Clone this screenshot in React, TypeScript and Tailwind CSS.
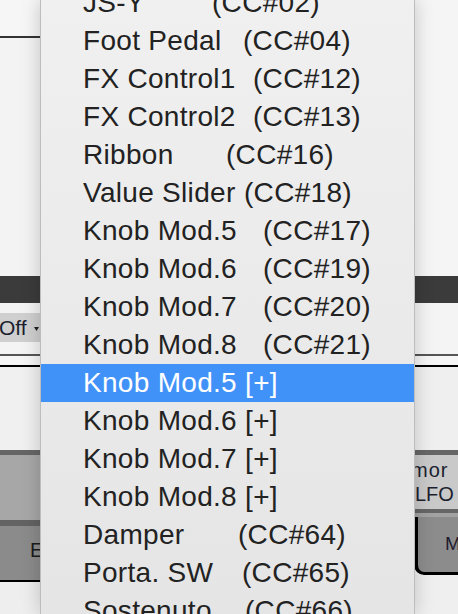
const items = [
  { label: 'JS-Y', cc: '(CC#02)', w: 'w-[129px]' },
  { label: 'Foot Pedal', cc: '(CC#04)', w: 'w-[160px]' },
  { label: 'FX Control1', cc: '(CC#12)', w: 'w-[170px]' },
  { label: 'FX Control2', cc: '(CC#13)', w: 'w-[170px]' },
  { label: 'Ribbon', cc: '(CC#16)', w: 'w-[143px]' },
  { label: 'Value Slider', cc: '(CC#18)', w: 'w-[161px]' },
  { label: 'Knob Mod.5', cc: '(CC#17)', w: 'w-[180px]' },
  { label: 'Knob Mod.6', cc: '(CC#19)', w: 'w-[180px]' },
  { label: 'Knob Mod.7', cc: '(CC#20)', w: 'w-[180px]' },
  { label: 'Knob Mod.8', cc: '(CC#21)', w: 'w-[180px]' },
  { label: 'Knob Mod.5 [+]', active: true },
  { label: 'Knob Mod.6 [+]' },
  { label: 'Knob Mod.7 [+]' },
  { label: 'Knob Mod.8 [+]' },
  { label: 'Damper', cc: '(CC#64)', w: 'w-[155px]' },
  { label: 'Porta. SW', cc: '(CC#65)', w: 'w-[159px]' },
  { label: 'Sostenuto', cc: '(CC#66)', w: 'w-[162px]' },
]

export default function App() {
  return (
    <div className="relative flex h-[614px] w-[458px] overflow-hidden bg-[#f2f2f2] font-['Liberation_Sans',Arial,sans-serif]">
      {/* left strip of the editor behind the menu */}
      <div className="flex w-[40px] shrink-0 flex-col">
        <div className="h-[36px] bg-[#f6f6f6]" />
        <div className="h-[2px] bg-[#333]" />
        <div className="h-[238px] bg-[#f3f3f3]" />
        <div className="h-[27px] bg-[#3b3b3b]" />
        <div className="h-[10px] bg-[#f3f3f3]" />
        <div className="flex h-[29px] items-center bg-[#cfcfcf] text-[21px] text-[#1c1f2e]">
          <span className="ml-[-1px] leading-none">Off</span>
          <svg width="5" height="4" viewBox="0 0 5 4" className="ml-[7px] mt-[2px]">
            <path d="M0 0h5L2.5 4z" fill="#222" />
          </svg>
        </div>
        <div className="h-[12px] bg-[#f4f4f4]" />
        <div className="h-[2px] bg-[#555]" />
        <div className="h-[9px] bg-[#f6f6f6]" />
        <div className="h-[2px] bg-black" />
        <div className="h-[83px] bg-[#f0f0f0]" />
        <div className="h-[5px] bg-[#666]" />
        <div className="h-[65px] bg-[#a7a7a7]" />
        <div className="h-[6px] bg-[#636363]" />
        <div className="flex h-[54px] items-center bg-[#8b8b8b] pl-[30px] text-[20px] text-[#1a1a1a]">
          <span className="pb-[6px]">E</span>
        </div>
        <div className="h-[2px] bg-black" />
        <div className="flex-1 bg-[#eeeeee]" />
      </div>

      <div className="flex-1" />

      {/* right strip */}
      <div className="flex w-[44px] shrink-0 flex-col">
        <div className="h-[276px] bg-[#f5f5f5]" />
        <div className="h-[27px] bg-[#3b3b3b]" />
        <div className="h-[51px] bg-[#f4f4f4]" />
        <div className="h-[2px] bg-[#555]" />
        <div className="h-[9px] bg-[#f6f6f6]" />
        <div className="h-[2px] bg-black" />
        <div className="h-[83px] bg-[#efefef]" />
        <div className="h-[5px] bg-[#666]" />
        <div className="flex h-[54px] flex-col justify-center overflow-hidden bg-[#c9c9c9] text-[20px] leading-[24px] text-[#1c1f2e]">
          <span className="ml-[-3px] whitespace-nowrap tracking-[1px]">mor</span>
          <span className="ml-[1px]">LFO</span>
        </div>
        <div className="h-[4px] bg-[#666]" />
        <div className="h-[4px] bg-[#a2a2a2]" />
        <div className="flex h-[58px] items-center rounded-bl-[10px] border-b-[3px] border-l-[4px] border-black bg-[#8c8c8c] pl-[27px] text-[19px] text-[#221a2e]">
          M
        </div>
        <div className="flex-1 bg-[#efefef]" />
      </div>

      {/* popup menu */}
      <div className="absolute left-[40px] top-0 h-[614px] w-[375px] overflow-hidden border-x border-[#bdbdbd] bg-gradient-to-b from-[#f0f0f0] to-[#e5e5e5] shadow-[0_0_18px_rgba(0,0,0,0.2)]">
        <div className="mt-[-16px] flex flex-col text-[28px] tracking-[0.3px]">
          {items.map((it) => (
            <div
              key={it.label}
              className={`flex h-[38px] items-center pl-[42px] ${it.active ? 'bg-[#4192f8] text-white' : 'text-[#222]'}`}
            >
              <span className={`${it.w ?? ''} shrink-0 whitespace-pre`}>{it.label}</span>
              {it.cc && <span>{it.cc}</span>}
            </div>
          ))}
        </div>
      </div>
    </div>
  )
}
